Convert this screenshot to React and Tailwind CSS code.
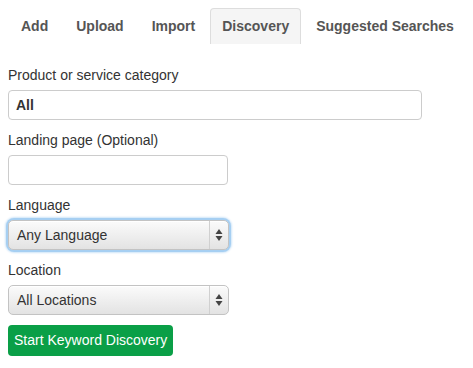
import { useState } from 'react';

const tabs = ['Add', 'Upload', 'Import', 'Discovery', 'Suggested Searches'];

const Arrows = () => (
  <svg width="8" height="14" viewBox="0 0 8 14" className="block">
    <path d="M4 1 L7.5 6 L0.5 6 Z" fill="#444" />
    <path d="M4 13 L7.5 8 L0.5 8 Z" fill="#444" />
  </svg>
);

const MacSelect = ({ value, focused }) => (
  <div
    className={
      'w-[221px] rounded-[6px] ' +
      (focused ? 'shadow-[0_0_0_2px_#a6cff2,0_0_2px_3px_#cfe5f8]' : '')
    }
  >
    <div className="flex h-[30px] items-stretch rounded-[5px] border border-[#c3c3c3] bg-gradient-to-b from-[#fbfbfb] to-[#e3e3e3] shadow-[inset_0_1px_0_#fff]">
      <div className="flex flex-1 items-center pl-[8px] text-[14px] text-[#333]">{value}</div>
      <div className="flex w-[19px] items-center justify-center border-l border-[#d0d0d0]">
        <Arrows />
      </div>
    </div>
  </div>
);

const Label = ({ children }) => (
  <div className="mb-[5px] h-5 text-[14px] leading-5 text-[#333]">{children}</div>
);

export default function App() {
  const [active, setActive] = useState('Discovery');

  return (
    <div className="min-h-screen bg-white px-2 pt-2" style={{ fontFamily: '"Liberation Sans", Arial, sans-serif' }}>
      {/* Tabs */}
      <div className="flex h-9 items-stretch">
        {tabs.map((t, i) => (
          <button
            key={t}
            onClick={() => setActive(t)}
            className={
              'flex shrink-0 items-center whitespace-nowrap text-[14px] font-bold text-[#555] ' +
              (i > 0 ? 'ml-[2px] ' : '') +
              (active === t
                ? 'rounded-t-[4px] border border-b-0 border-[#ddd] bg-[#f5f5f5] px-[11px]'
                : 'px-[13px]')
            }
          >
            {t}
          </button>
        ))}
      </div>

      <form className="mt-[21px]">
        <Label>Product or service category</Label>
        <div className="mb-[10px] flex h-[30px] w-[414px] items-center rounded-[4px] border border-[#ccc] px-[7px] text-[14px] font-bold text-[#333]">
          All
        </div>

        <Label>Landing page (Optional)</Label>
        <input className="mb-[10px] block h-[30px] w-[220px] rounded-[4px] border border-[#ccc] px-2 text-[14px] outline-none" />

        <Label>Language</Label>
        <div className="mb-[10px]">
          <MacSelect value="Any Language" focused />
        </div>

        <Label>Location</Label>
        <div className="mb-[10px]">
          <MacSelect value="All Locations" />
        </div>

        <button
          type="button"
          className="h-[31px] rounded-[4px] bg-[#0a9f47] px-[6px] text-[14px] text-white"
        >
          Start Keyword Discovery
        </button>
      </form>
    </div>
  );
}
